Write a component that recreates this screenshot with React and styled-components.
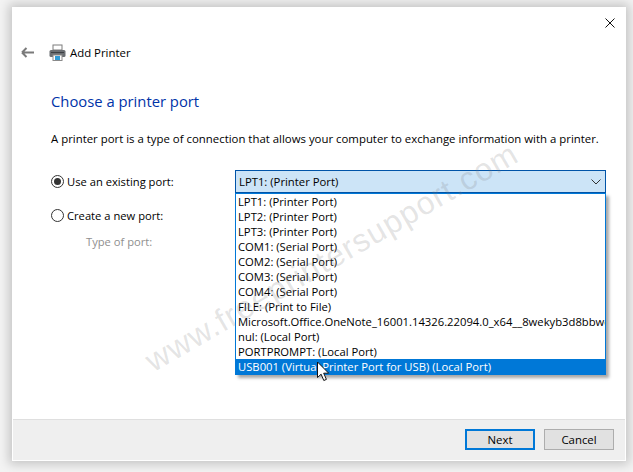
import styled, { createGlobalStyle } from "styled-components";

const Global = createGlobalStyle`
  html, body {
    margin: 0;
    padding: 0;
    background: #f3f3f3;
  }
  body {
    width: 633px;
    height: 472px;
    overflow: hidden;
    font-family: "Open Sans", "Noto Sans", "Liberation Sans", sans-serif;
  }
`;

const ports = [
  "LPT1: (Printer Port)",
  "LPT2: (Printer Port)",
  "LPT3: (Printer Port)",
  "COM1: (Serial Port)",
  "COM2: (Serial Port)",
  "COM3: (Serial Port)",
  "COM4: (Serial Port)",
  "FILE: (Print to File)",
  "Microsoft.Office.OneNote_16001.14326.22094.0_x64__8wekyb3d8bbwe",
  "nul: (Local Port)",
  "PORTPROMPT: (Local Port)",
  "USB001 (Virtual Printer Port for USB) (Local Port)",
];

const App = () => {
  return (
    <Page>
      <Global />
      <Dialog>
        <CloseRow>
          <svg width="10" height="10" viewBox="0 0 10 10">
            <path d="M0.5 0.5l9 9M9.5 0.5l-9 9" stroke="#111" strokeWidth="1" fill="none" />
          </svg>
        </CloseRow>
        <Header>
          <svg width="13" height="11" viewBox="0 0 13 11">
            <path d="M1 5.5h12M1 5.5l4.5-4.5M1 5.5l4.5 4.5" stroke="#7a7a7a" strokeWidth="2" fill="none" />
          </svg>
          <HeaderTitle>
            <svg width="17" height="17" viewBox="0 0 17 17">
              <rect x="4" y="1" width="9" height="5" fill="#fff" stroke="#7d7d7d" />
              <rect x="0.5" y="6" width="16" height="7" rx="1.5" fill="#6a6e72" />
              <rect x="2" y="8" width="13" height="1" fill="#3d4044" />
              <rect x="4" y="11" width="9" height="5.5" fill="#fff" stroke="#8a8a8a" />
              <rect x="6" y="12" width="5" height="4" fill="#2f9bd6" />
            </svg>
            <span>Add Printer</span>
          </HeaderTitle>
        </Header>
        <Content>
          <Heading>Choose a printer port</Heading>
          <Intro>
            A printer port is a type of connection that allows your computer to exchange
            information with a printer.
          </Intro>
          <PortRow>
            <RadioLabel>
              <Radio $checked />
              <span>Use an existing port:</span>
            </RadioLabel>
            <SelectWrap>
              <SelectBox>
                <span>LPT1: (Printer Port)</span>
                <svg width="10" height="6" viewBox="0 0 10 6">
                  <path d="M0.5 0.5L5 5l4.5-4.5" stroke="#333" strokeWidth="1" fill="none" />
                </svg>
              </SelectBox>
              <PortList>
                {ports.map((port, i) => (
                  <PortItem key={port} $selected={i === ports.length - 1}>
                    {port}
                  </PortItem>
                ))}
              </PortList>
              <Cursor width="14" height="21" viewBox="0 0 14 21">
                <path
                  d="M1.5 1v15.5l3.6-3.3 2.7 6.3 2.6-1.1-2.7-6.2h5z"
                  fill="#fff"
                  stroke="#111"
                  strokeWidth="1"
                />
              </Cursor>
            </SelectWrap>
          </PortRow>
          <NewPortRow>
            <RadioLabel>
              <Radio />
              <span>Create a new port:</span>
            </RadioLabel>
          </NewPortRow>
          <TypeLabel>Type of port:</TypeLabel>
        </Content>
        <Footer>
          <Button $primary>Next</Button>
          <Button>Cancel</Button>
        </Footer>
      </Dialog>
      <Watermark>www.freeprintersupport.com</Watermark>
    </Page>
  );
};

const Page = styled.div`
  position: relative;
  width: 633px;
  height: 472px;
  padding: 7px 7px 11px 12px;
  box-sizing: border-box;
  overflow: hidden;
  background: #f3f3f3;
`;

const Dialog = styled.div`
  display: flex;
  flex-direction: column;
  height: 100%;
  box-sizing: border-box;
  background: #fff;
  border: 1px solid #fff;
  box-shadow: 0 0 10px 3px rgba(0, 0, 0, 0.2);
  color: #000;
  font-size: 11.3px;
`;

const CloseRow = styled.div`
  display: flex;
  justify-content: flex-end;
  padding: 10px 10px 0 0;
  height: 11px;
`;

const Header = styled.div`
  display: flex;
  align-items: center;
  gap: 15px;
  margin-top: 13px;
  padding-left: 8px;
  height: 20px;
`;

const HeaderTitle = styled.div`
  display: flex;
  align-items: center;
  gap: 4px;
  font-size: 11.4px;
`;

const Content = styled.div`
  flex: 1;
  padding: 0 0 0 38px;
`;

const Heading = styled.h1`
  margin: 29px 0 0;
  font-size: 14.8px;
  line-height: 20px;
  font-weight: 400;
  color: #0033a8;
`;

const Intro = styled.p`
  margin: 19px 0 0;
  font-size: 11.4px;
  line-height: 17px;
  white-space: nowrap;
`;

const PortRow = styled.div`
  display: flex;
  align-items: center;
  margin: 23px 0 0 0;
`;

const RadioLabel = styled.label`
  display: flex;
  align-items: center;
  gap: 3px;
  width: 184px;
  font-size: 11.2px;
`;

const Radio = styled.span`
  position: relative;
  width: 11px;
  height: 11px;
  border: 1px solid #333;
  border-radius: 50%;
  background: #fff;

  &::after {
    content: "";
    display: ${(p) => (p.$checked ? "block" : "none")};
    position: absolute;
    inset: 2px;
    border-radius: 50%;
    background: #333;
  }
`;

const SelectWrap = styled.div`
  position: relative;
  width: 371px;
`;

const SelectBox = styled.div`
  display: flex;
  align-items: center;
  justify-content: space-between;
  height: 21px;
  padding: 0 4px 0 3px;
  border: 1px solid #0054a8;
  background: #cce4f7;
  font-size: 11.3px;
`;

const PortList = styled.ul`
  position: absolute;
  top: 23px;
  left: 0;
  width: 371px;
  box-sizing: border-box;
  margin: 0;
  padding: 0;
  list-style: none;
  border: 1px solid #0078d7;
  background: #fff;
  box-shadow: 3px 3px 3px rgba(0, 0, 0, 0.35);
  overflow: hidden;
  z-index: 2;
`;

const PortItem = styled.li`
  height: 15px;
  line-height: 15px;
  padding-left: 2px;
  font-size: 11.25px;
  white-space: nowrap;
  color: ${(p) => (p.$selected ? "#fff" : "#000")};
  background: ${(p) => (p.$selected ? "#0078d7" : "transparent")};
`;

const Cursor = styled.svg`
  position: absolute;
  top: 191px;
  left: 81px;
  z-index: 3;
`;

const NewPortRow = styled.div`
  margin: 15px 0 0 0;
`;

const TypeLabel = styled.div`
  margin: 11px 0 0 35px;
  font-size: 11.2px;
  color: #8f8f8f;
`;

const Footer = styled.div`
  display: flex;
  justify-content: flex-end;
  gap: 9px;
  height: 41px;
  box-sizing: border-box;
  padding: 9px 11px 0 0;
  background: #efefef;
  border-top: 1px solid #dfdfdf;
`;

const Button = styled.button`
  width: 70px;
  height: 21px;
  box-sizing: border-box;
  padding: 0;
  font-family: inherit;
  font-size: 11.4px;
  color: #000;
  background: #e1e1e1;
  border: ${(p) => (p.$primary ? "2px solid #0078d7" : "1px solid #adadad")};
`;

const Watermark = styled.div`
  position: absolute;
  left: 148px;
  top: 345px;
  font-family: "Liberation Sans", sans-serif;
  font-size: 32px;
  white-space: nowrap;
  letter-spacing: 1px;
  color: rgba(120, 120, 120, 0.2);
  transform: rotate(-30deg);
  transform-origin: left center;
  pointer-events: none;
  z-index: 4;
`;

export default App;
